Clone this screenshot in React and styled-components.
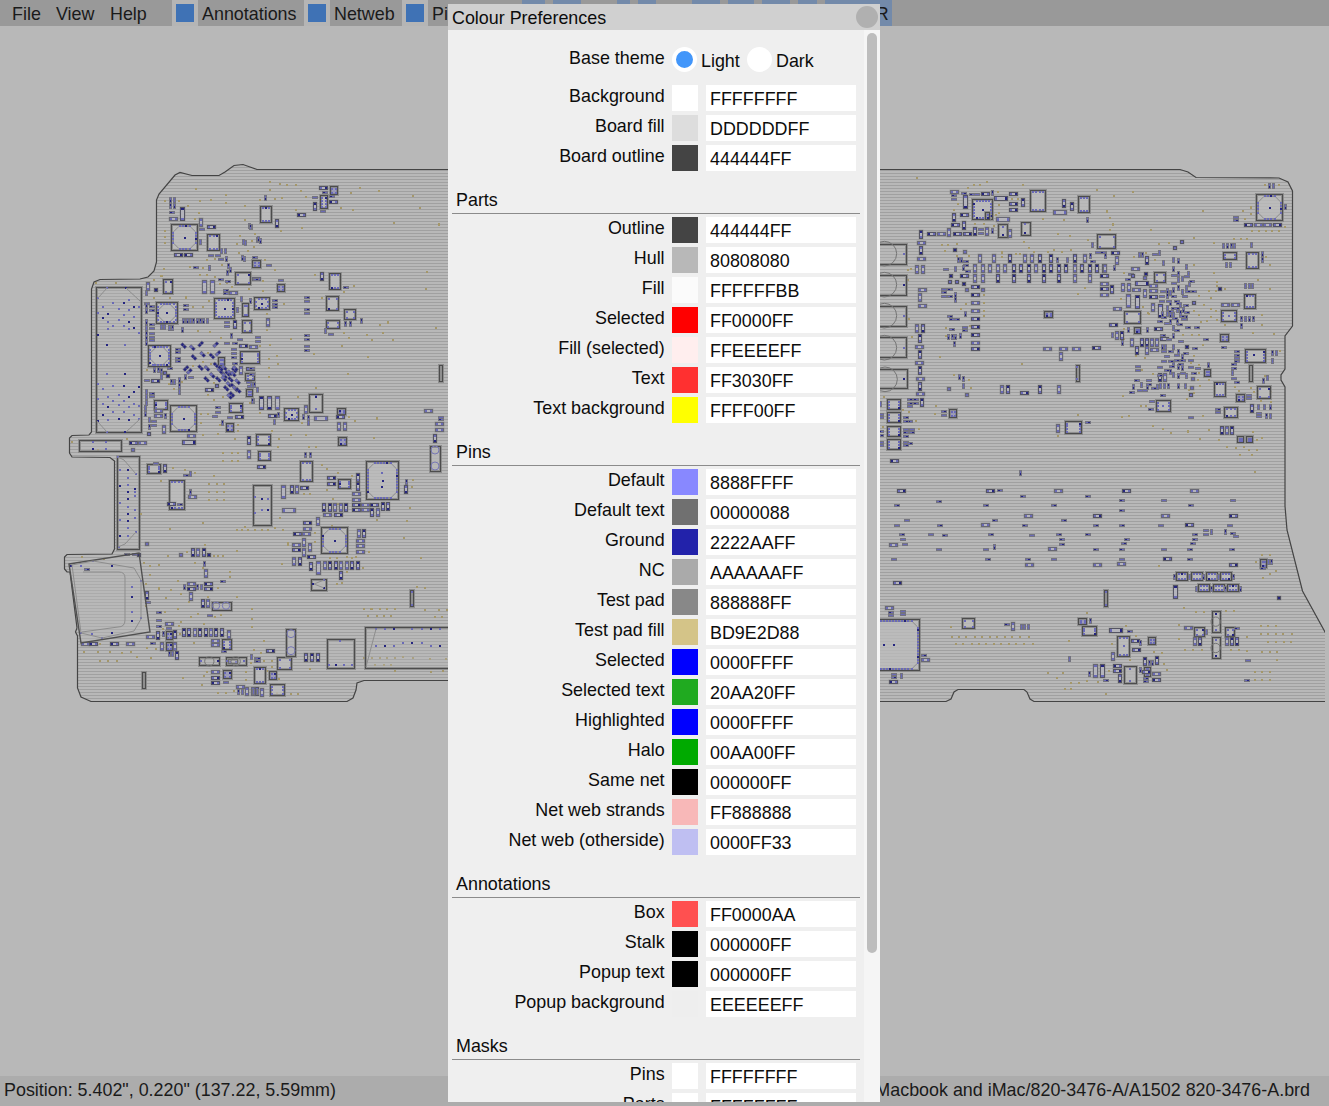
import React from 'react';
import styled, { createGlobalStyle } from 'styled-components';

const Global = createGlobalStyle`
  * { box-sizing: border-box; }
  html, body { margin: 0; height: 100%; overflow: hidden; }
  body { background: #b8b8b8; color: #1a1a1a; font: 17.9px/20px "Liberation Sans", Arial, sans-serif; }
  #root { height: 100%; }
`;

const Shell = styled.div`
  height: 1106px;
  width: 1329px;
  display: flex;
  flex-direction: column;
  overflow: hidden;
  position: relative;
`;
const MenuBar = styled.nav`
  flex: 0 0 26px;
  display: flex;
  align-items: stretch;
  background: #999;
  padding-left: 12px;
`;
const MenuItem = styled.span`
  width: ${p => p.$w}px;
  padding-top: 4px;
  white-space: nowrap;
`;
const CheckBox = styled.span`
  width: 26px;
  padding: 4px;
  background: #b5b5b5;
  &::before { content: ""; display: block; width: 18px; height: 18px; background: #3f72b5; }
`;
const CheckLabel = styled.span`
  width: ${p => p.$w}px;
  padding: 4px 0 0 4px;
  white-space: nowrap;
`;
const ToolButton = styled.button`
  width: ${p => p.$w}px;
  margin: 0 0 0 ${p => p.$gap}px;
  padding: 2px 4px 0;
  border: 0;
  background: #738aaa;
  color: #1a1a1a;
  font: inherit;
`;
const Canvas = styled.main`
  flex: 1;
  min-height: 0;
  svg { display: block; }
`;
const StatusBar = styled.footer`
  flex: 0 0 30px;
  display: flex;
  justify-content: space-between;
  padding: 4px 19px 0 4px;
  background: #acacac;
  white-space: nowrap;
`;

const Dialog = styled.section`
  position: absolute;
  left: 448px;
  top: 4px;
  width: 432px;
  height: 1098px;
  display: flex;
  flex-direction: column;
  background: #efefef;
  color: #0c0c0c;
  overflow: hidden;
`;
const TitleBar = styled.header`
  flex: 0 0 26px;
  display: flex;
  justify-content: space-between;
  align-items: center;
  padding: 2px 2px 0 4px;
  background: #d0d0d0;
`;
const CloseButton = styled.button`
  width: 22px;
  height: 22px;
  margin-top: -2px;
  border: 0;
  border-radius: 50%;
  background: #b0b0b0;
`;
const DialogBody = styled.div`
  flex: 1;
  min-height: 0;
  display: flex;
`;
const Form = styled.div`
  flex: 1;
  min-width: 0;
  padding: 16px 4px 0;
`;
const ScrollTrack = styled.div`
  width: 16px;
  padding: 3px;
  background: #f5f5f5;
`;
const ScrollThumb = styled.div`
  height: 920px;
  border-radius: 5px;
  background: #bdbdbd;
`;
const Row = styled.div`
  display: flex;
  height: 26px;
  margin-bottom: 4px;
`;
const ThemeRow = styled(Row)`
  margin-bottom: 13px;
`;
const Label = styled.label`
  width: 212.6px;
  margin-right: 7.4px;
  padding-top: ${p => p.$top ?? 1}px;
  text-align: right;
  white-space: nowrap;
`;
const Swatch = styled.span`
  width: 26px;
  margin-right: 8px;
  background: ${p => p.$color};
`;
const HexField = styled.input`
  width: 150px;
  padding: 2px 4px 0;
  border: 0;
  outline: 0;
  background: #fff;
  color: #0c0c0c;
  font: inherit;
`;
const Radio = styled.span`
  width: 25px;
  height: 25px;
  margin-top: 1px;
  border: 4px solid #fff;
  border-radius: 50%;
  background: ${p => (p.$on ? '#4296fa' : '#fff')};
`;
const RadioLabel = styled.span`
  width: ${p => p.$w}px;
  padding: 5px 0 0 4px;
`;
const SectionTitle = styled.h2`
  height: 39px;
  margin: 0 0 3px;
  padding: 15px 4px 0;
  border-bottom: 1px solid #8b8b8b;
  font: inherit;
`;

const BOARD = [
  ['Background', '#ffffff', 'FFFFFFFF'],
  ['Board fill', '#dddddd', 'DDDDDDFF'],
  ['Board outline', '#444444', '444444FF'],
];
const SECTIONS = [
  ['Parts', [
    ['Outline', '#444444', '444444FF'],
    ['Hull', '#b8b8b8', '80808080'],
    ['Fill', '#fbfbfb', 'FFFFFFBB'],
    ['Selected', '#ff0000', 'FF0000FF'],
    ['Fill (selected)', '#ffeeee', 'FFEEEEFF'],
    ['Text', '#ff3030', 'FF3030FF'],
    ['Text background', '#ffff00', 'FFFF00FF'],
  ]],
  ['Pins', [
    ['Default', '#8888ff', '8888FFFF'],
    ['Default text', '#707070', '00000088'],
    ['Ground', '#2222aa', '2222AAFF'],
    ['NC', '#aaaaaa', 'AAAAAAFF'],
    ['Test pad', '#888888', '888888FF'],
    ['Test pad fill', '#d4c488', 'BD9E2D88'],
    ['Selected', '#0000ff', '0000FFFF'],
    ['Selected text', '#20aa20', '20AA20FF'],
    ['Highlighted', '#0000ff', '0000FFFF'],
    ['Halo', '#00aa00', '00AA00FF'],
    ['Same net', '#000000', '000000FF'],
    ['Net web strands', '#f8b8b8', 'FF888888'],
    ['Net web (otherside)', '#bfbff2', '0000FF33'],
  ]],
  ['Annotations', [
    ['Box', '#ff5050', 'FF0000AA'],
    ['Stalk', '#000000', '000000FF'],
    ['Popup text', '#000000', '000000FF'],
    ['Popup background', '#eeeeee', 'EEEEEEFF'],
  ]],
  ['Masks', [
    ['Pins', '#ffffff', 'FFFFFFFF'],
    ['Parts', '#ffffff', 'FFFFFFFF'],
  ]],
];

/* Board artwork. Each sector has a pixel origin and is measured in thirds of a pixel.
   Passives are listed by centre: h/v medium, t/u tiny, H/V large, k square.
   Boxes are x,y,w,h: q quad package, b pins top and bottom, s pins at the sides, e corner pins, n none. */
const PASSIVE = { h: [27, 12], v: [12, 27], t: [18, 9], u: [9, 18], H: [42, 15], V: [15, 42], k: [12, 12], d: [9, 18], g: [9, 18] };
const SECTORS = [
  { at: [60, 155], parts: {
    u: '332,136 342,136 332,152 342,152 421,261 447,339 485,288 496,288 499,312 544,432 571,437 260,415',
    t: '337,171 426,223 483,312 503,380 483,374 474,301 453,301 498,407 498,416 408,338 260,446',
    h: '340,193 453,216 355,300 386,300 520,414 589,373',
    v: '424,203 265,393',
    V: '366,177 433,395 457,397',
    k: '289,406',
    d: '567,214 574,217 549,260 556,263 547,309 554,313 592,254 505,332 511,344 503,354',
  }, boxes: { q: '332,207,79,79', b: '440,236,35,48', e: '524,350,44,35 308,371,26,41 577,316,24,22' },
    gold: '407,102 498,120 315,138 357,138 420,138 453,135 384,153 417,174 405,192 498,144 556,153 315,228 315,246 315,264 540,243 555,195 576,258 585,237 530,267 564,288 537,294 582,276 465,311 441,315 486,330 429,339 420,360 441,360 390,336 312,342 303,363 306,363 282,375 168,384 108,384 465,366 480,387 516,396 567,402 501,384 282,429 330,429 378,426 378,429 447,438' },
  { at: [250, 155], parts: {
    h: '220,98 155,181 250,141',
    v: '195,154 82,205 217,365 54,502',
    t: '224,112 246,125 195,127 219,169 58,332 92,376 288,398 15,307 19,373 170,427 170,439 170,462 170,474 170,541 170,553 170,575 170,587 75,436 75,447 75,457 23,547 23,558 243,537',
    u: '46,129 334,498 287,507 301,507 226,528',
    d: '24,252 32,258 2,216',
  }, boxes: { s: '209,121,21,39 241,94,22,24 82,386,20,22 228,494,39,25', b: '31,152,34,47 236,354,33,49', e: '229,422,36,43 282,461,32,30', q: '11,425,46,36' },
    gold: '60,81 60,105 90,87 110,90 138,90 153,108 168,126 96,129 75,132 30,135 138,165 156,219 93,228 15,237 12,276 45,315 75,345 194,360 39,378 39,408 6,259 273,159 303,114 330,99 387,108 489,123 510,159 309,165 432,204 567,207 567,210 531,351 528,402 312,393 282,411 216,429 102,447 51,477 51,525 123,552 192,597 276,573 297,549 282,534 351,540 365,555 390,510 414,504 414,501 399,534 429,555 558,519 60,570 30,573 264,445' },
  { at: [60, 300], parts: {
    t: '275,20 275,32 275,72 275,85 275,101 275,113 275,120 501,67 501,79 501,130 540,117 526,130 330,204 262,242 447,271 474,323 474,336 465,349 510,351 379,17 379,27 355,148 355,158 355,174 355,184 275,280 275,290 283,365 283,375 522,149 522,161 522,173 525,190 287,489 378,526 392,233 567,247 570,260',
    u: '260,15 260,32 260,67 260,84 260,101 260,118 260,130 283,210 294,210 304,212 304,232 335,245 344,245 376,230 260,275 260,292 260,310 257,325 257,342 268,360 514,107 583,256 593,270 579,302 533,30 392,522 390,576',
    h: '286,243 448,271 296,332 296,348 394,407 219,429 246,429 551,139 580,141 570,206 537,352',
    v: '526,73 544,210 313,388 315,505 566,420 566,463',
    H: '387,427',
    d: '303,82 313,82 329,83 338,83 358,239 358,258 358,275 316,349 268,380 488,368',
    k: '316,220 324,228 268,401 219,449 470,258',
    g: '367,91 374,62 382,62 391,62 401,62 411,62 421,62 431,62 441,62 369,62',
  }, diag: '371,137 397,143 422,132 467,134 402,172 428,163 456,168 474,160 422,203 441,205 468,195 493,203 378,205 388,214 440,238 457,226 475,238 480,212 487,219 494,228 503,220 510,218 523,210 526,205 512,238 533,245 499,265 507,253 519,258 526,266 535,271 509,289 516,283 492,236 482,205 520,222',
    boxes: { q: '289,5,63,63 265,134,66,62 329,314,77,79 462,-5,60,60', s: '539,154,58,37 506,308,38,27 499,368,21,23 283,299,39,26 262,493,40,26', e: '547,60,28,37 556,218,28,20 557,268,17,22 475,170,19,24 545,8,18,38', b: '326,539,45,88', n: '109,-39,135,436 57,421,125,34 170,467,65,278' },
    dots: '142,-37 197,-37 113,-6 129,22 144,43 176,28 160,10 192,10 207,-1 207,30 223,22 192,45 223,52 129,55 144,66 176,60 207,66 160,77 192,77 223,85 144,88 207,88 142,136 196,136 142,221 196,221 129,267 160,258 192,258 176,285 144,291 207,291 160,303 192,302 223,277 129,312 223,312 144,322 176,316 207,322 129,345 160,337 192,337 176,357 223,345 144,360 207,360 113,38 238,22 113,104 238,99 113,253 238,262 113,296 238,318 113,362 238,357 142,395 196,395 100,426 139,426 100,448 139,448 180,511 203,511 203,533 203,555 180,558 203,577 225,577 225,566 229,521 174,472',
    gold: '400,20 429,20 414,94 450,97 483,113 444,158 429,186 474,184 453,192 400,198 260,210 367,247 328,253 342,267 462,248 444,284 489,290 462,300 571,310 423,342 443,342 480,376 534,374 423,370 534,392 429,406 474,402 525,418 200,417 489,459 516,459 534,459 489,483 516,483 534,483 339,504 375,510 462,528 304,543 447,552 471,552 492,552 447,576 471,576 492,576 404,520 36,426 114,450' },
  { at: [250, 350], parts: {
    h: '535,183 568,222 568,240 272,200 318,433 318,449 318,465 318,481 345,465 345,481 372,465 66,199 34,352 243,384 243,401 163,413 232,495 265,495 141,552 168,552 173,520 173,537 139,584 139,600 184,622 332,573 332,589 332,606',
    v: '266,228 284,228 222,471 240,471 256,471 273,471 289,471 399,469 415,469 367,488 383,488 325,383 325,408 125,418 141,418 203,515 327,549 343,549 162,576 179,592 162,607 133,634 149,634 183,648 225,646 241,646 258,646 274,646 291,646 307,646 324,646 274,676 555,266 469,418 167,178',
    V: '33,158 57,158 81,158 99,425 204,653', H: '213,204 118,482',
    u: '73,216 85,195 174,203 174,218 160,201 167,315 181,315 469,395 3,104 12,106 23,120 8,153',
    t: '572,201 572,207 6,56 6,74 170,2',
  }, boxes: { q: '101,173,43,37 349,334,97,115 214,530,79,78', b: '149,332,36,60', e: '261,173,23,18 265,260,25,24', s: '19,253,42,34 23,304,36,28 265,388,37,28', n: '178,133,40,54 9,404,53,119 568,45,10,48 541,287,29,74' },
    circles: '555,300,12 555,348,12',
    dots: '198,139 198,142 198,178 15,440 36,447 53,447 36,480 53,480 15,488 397,369 397,411',
    gold: '81,18 84,42 57,27 57,54 57,81 192,12 354,21 294,72 198,114 144,141 29,189 297,201 315,213 382,204 382,207 372,264 66,243 123,255 87,267 84,291 168,255 178,291 198,291 156,219 216,345 231,357 306,378 264,369 231,420 249,447 264,462 180,432 162,432 489,390 486,411 480,474 471,513 381,510 90,504 54,540 36,540 15,540 75,534 99,540 114,579 114,586 96,642 240,624 261,624 291,621 306,624 318,621 246,528 462,564 513,624 357,606 194,549 195,576 339,654 291,666 276,699 261,702 500,711 526,714' },
  { at: [60, 490], parts: {
    v: '398,187 415,187 431,187 439,250 393,320 428,340 444,340 260,316 295,435 344,433 306,469 344,469 351,496 506,432 371,427 387,427 404,427 420,427 437,427 453,427 469,427 486,427 562,605 592,605 580,605',
    u: '432,221 373,291 412,291 424,291 309,433 329,493 338,493 574,500',
    h: '393,282 444,282 393,297 444,297 398,22 334,43 212,463 163,461 76,461 100,461 466,452 466,466 466,546 466,563 466,579 272,442 328,402 542,592',
    t: '488,274 450,376 82,237 360,42 296,368 298,392 298,409 326,415 279,459 264,336 491,484 499,577 592,505 592,514 200,194 225,194',
    k: '260,161 364,195 446,195 238,194', d: '390,8 536,607 547,607',
  }, boxes: { s: '485,447,26,31 488,541,23,25 317,422,18,24 317,457,18,24 504,508,28,12', n: '455,335,56,23 418,502,61,24 497,502,61,24 247,545,9,47' },
    circles: '468,347,11 498,347,11 448,514,14 527,514,14',
    dots: '424,514 473,514 502,514 551,514 203,6 225,17 180,39 203,28 203,50 225,61 203,72 225,83 180,89 203,94 203,115 203,137 180,137 229,127 176,172 33,228 63,228 99,213 155,228 242,273 216,292 216,320 216,365 242,384 216,392 63,429 96,432 155,430 126,444',
    gold: '242,72 330,117 429,99 531,120 555,111 546,120 564,120 585,120 447,30 471,30 492,30 66,201 132,206 252,219 270,228 297,225 324,198 435,165 381,186 405,219 462,198 474,198 489,198 531,183 429,234 510,246 510,261 354,273 270,254 258,282 298,294 298,297 334,300 318,324 363,312 404,292 474,294 387,336 530,321 445,321 258,348 315,366 354,357 414,372 392,381 364,395 575,357 576,387 576,411 483,375 465,382 357,407 432,402 360,432 423,439 401,460 308,417 260,474 288,477 321,481 72,486 114,486 150,486 186,489 213,486 231,501 120,513 144,513 171,513 273,504 370,564 426,586 441,546 432,558 558,546 558,570 474,609 498,609 522,604 120,463' },
  { at: [250, 560], parts: { h: '60,272', v: '169,291 187,291 205,291 36,397', u: '9,397 22,397 4,291', t: '23,294 23,303' },
    boxes: { e: '80,292,42,36 56,334,20,24', s: '61,373,43,33', b: '13,322,34,48', n: '184,56,45,34 231,236,80,86 109,206,28,80 481,91,10,49 344,201,280,124' },
    circles: '123,221,12 123,272,12',
    dots: '486,97 190,72 486,134 223,61 223,84 378,206 405,206 432,206 487,206 515,206 542,206 570,206 460,249 487,249 515,249 378,258 405,258 432,258 542,258 570,258 270,242 236,316 259,316 282,316 306,316',
    gold: '6,147 6,177 6,201 42,243 12,270 33,279 3,310 42,303 67,303 67,322 51,333 87,357 81,399 123,402 144,402 180,327 342,147 363,147 366,147 390,147 411,147 435,147 354,168 381,168 402,168 423,168 526,150 567,150 590,150 555,171 577,171 342,294 366,294 390,294 411,294 435,294 459,291 489,295 376,315 402,315 423,315 541,297 588,297 435,333 543,336 579,333' },
  { at: [875, 155], parts: {
    V: '271,142', H: '379,130 555,171 385,193',
    h: '238,111 331,118 415,116 414,148 414,165 268,181 242,211 170,237 199,237 247,237 277,237 138,264 138,311 142,404 142,453 134,576 134,623 136,671 136,718 301,397 301,420 301,443 301,468 301,491 301,516 301,539 301,564 301,582 268,363 517,582 566,582 604,582 663,578 448,715',
    v: '444,142 568,144 590,153 238,187 267,211 223,232 300,229 337,229 404,234 138,239 138,286 127,343 145,343 134,427 127,520 145,520 136,551 134,598 136,646 136,693 141,741 316,310 358,310 404,310 449,310 470,310 495,310 528,310 600,310 630,310 299,339 324,339 345,339 370,339 391,339 416,339 437,339 462,339 482,339 507,339 528,339 553,339 574,339 600,339 620,339 645,339 666,339 687,339 299,369 324,369 370,369 416,369 462,369 507,369 553,369 600,369 645,369 558,605 381,704 398,704 496,704 553,704 549,820',
    t: '238,122 238,132 267,116 290,117 306,117 318,223 318,235 272,320 272,331 279,350 213,342 208,402 224,402 206,413 208,425 224,425 224,484 230,494 246,494 230,523 271,516 271,526 207,769 207,781 104,733 104,744 104,755 122,733 122,744 17,778 17,788 93,788 104,798 93,798 17,828 17,840 93,822 110,822 93,832 110,832 93,844 17,862 17,872 93,862 93,872 104,866 639,802 668,293 686,293 654,320',
    u: '352,114 352,228 250,316 259,316 265,338 241,342 241,420 241,436 271,478 256,542 221,545 232,545 242,545 238,567 253,666 266,672 266,692 547,314 577,314 646,303 651,270 636,194 17,748',
    k: '240,284 270,291 229,363 225,381 246,381 266,386 276,405 325,405 276,720 221,702',
  }, boxes: { q: '290,133,61,60', b: '466,106,46,64 608,124,33,47', e: '665,236,53,43 508,469,23,19 223,763,21,24 330,172,12,20', s: '569,797,48,35 37,731,38,29 37,772,38,29 37,812,38,29 37,853,38,29', n: '370,208,28,40 437,202,27,40 -30,266,124,59 -30,359,124,59 -30,453,124,59 -30,547,124,60 -30,643,125,58 602,631,8,47' },
    circles: '28,296,37 28,389,37 28,482,37 28,578,37 30,673,37',
    dots: '87,296 87,389 87,482 87,578 88,671 606,637 384,215 384,240 450,208 606,672 450,234',
    gold: '126,69 336,81 444,90 297,90 315,90 279,99 369,110 411,132 429,132 372,150 250,147 237,165 372,174 363,180 504,192 567,195 666,105 300,207 327,207 357,212 447,261 381,291 381,294 381,306 462,279 201,270 219,270 210,288 246,267 246,303 282,303 423,298 434,298 478,291 519,291 538,285 560,291 588,285 108,342 99,345 99,375 327,420 327,444 327,468 273,447 102,492 111,546 195,606 609,417 630,399 441,627 237,660 282,675 288,699 27,726 183,753 180,777 102,771 123,799 84,765 24,817 132,822 609,780 549,843 584,243 549,238 640,255 258,462 284,514 214,520 212,544 327,484' },
  { at: [1100, 155], parts: {
    h: '105,342 160,393 160,409 160,427 109,406 52,463 39,510 174,522 194,552 163,584 13,364 13,386 13,403 13,421 46,295 377,451 405,451 446,211 475,211 503,211 532,211',
    v: '52,316 141,316 16,339 69,398 87,398 136,414 35,402 160,456 51,540 67,540 97,561 126,561 141,561 156,561 171,561 111,586 141,586 181,667 196,667 365,827 381,827 397,827 456,760',
    V: '84,438 113,440 180,468', H: '126,386',
    u: '118,300 128,300 190,324 178,293 221,315 235,318 258,335 17,303 43,340 454,269 487,297 487,316 437,393 447,393 457,393 424,491 437,491 449,491 460,491 424,512 371,272 382,272 393,272 402,272 380,330 391,330 557,157 509,93 519,93 517,595 529,595 517,617 396,655 325,630 489,679 502,668 475,757 493,757 511,757 498,783 511,783 84,526 141,526 38,540 67,563 221,342 236,358 265,358 236,374 201,408 201,424 211,415 248,372 236,400 248,410 258,398 268,388 221,405 211,445 201,460 201,476 211,480 231,465 240,450 249,465 258,490 221,480 240,475 188,478 211,500 231,500 221,518 221,576 236,592 248,605 221,627 236,636 211,650 221,660 236,664 248,640 259,662 181,692 192,692 205,692 236,692 255,692 100,697 141,697 123,690 171,697 188,576 197,576 221,542',
    t: '8,293 165,298 222,362 222,385 262,365 275,380 282,408 256,424 265,408 190,408 186,424 185,440 222,424 232,440 238,444 206,440 222,459 232,459 258,450 262,472 245,484 252,494 192,486 212,468 181,499 202,505 226,490 241,507 231,526 264,517 291,517 190,540 206,552 243,558 317,553 285,580 258,595 250,617 272,617 232,600 232,617 192,589 214,589 202,605 212,620 180,637 202,646 216,635 250,656 272,638 282,655 294,641 242,628 192,620 111,676 147,676 147,687 120,705 134,705 95,712 188,721 155,740 153,763 115,634 115,645 181,660 272,787 372,577 354,762 354,772 478,775 478,785 447,720 447,731 407,187 407,197 411,590 411,601 411,609 411,620 403,628 403,640 402,671 411,681 84,372 92,358 163,700',
    k: '245,262 224,280 138,356 134,369 99,363 283,443 262,577 278,672 276,699 274,720 360,402',
  }, boxes: { q: '467,116,77,77', b: '437,292,35,48 432,418,34,43 342,681,33,43 371,757,38,30', s: '363,466,46,33 368,292,38,21 434,581,60,38 167,736,43,33', e: '161,352,33,31 71,469,48,36 103,517,19,19 359,538,24,21 313,643,18,21 470,694,38,36 409,716,24,20 412,844,18,18 439,844,18,18', n: '447,631,9,47' },
    dots: '386,482 463,600 188,752',
    gold: '42,123 99,111 21,168 30,189 21,171 39,207 39,210 30,225 153,225 309,168 282,249 177,267 207,264 429,168 453,156 453,159 453,177 435,192 495,90 537,90 555,216 456,228 477,228 498,228 516,228 537,228 402,252 423,252 441,252 102,306 138,295 165,315 282,330 72,354 342,354 510,330 498,306 342,264 474,375 510,402 351,381 351,393 348,408 375,402 327,408 297,423 333,429 312,450 333,463 282,468 297,480 333,486 348,468 321,498 303,502 351,496 375,510 486,480 486,510 144,474 147,477 129,456 63,432 72,522 120,518 522,537 459,534 276,541 297,541 249,541 309,571 282,603 273,625 297,630 315,660 297,655 300,694 327,675 72,552 108,604 136,610 126,645 160,657 70,723 124,752 138,752 87,783 66,787 159,813 189,822 213,834 265,828 265,831 327,825 300,852 357,854 382,875 408,878 432,876 447,885 471,855 459,832 486,850 261,732 267,705 294,675 282,715 453,700 513,712 417,709 462,712 540,588 495,662 405,695 309,783 484,738 513,742' },
  { at: [875, 450], parts: {
    h: '58,34 79,123 345,123 549,123 755,123 959,123 461,197 666,197 871,197 1075,197 331,225 943,225 56,284 532,298 462,345 666,345 740,343 877,328 1075,346 67,398 42,473 152,630 56,696 728,647 728,663 784,600 844,672 844,691 782,573 940,535 815,665',
    t: '374,121 444,138 640,138 741,151 868,151 1074,151 193,153 67,167 333,167 537,167 947,167 741,182 97,211 361,211 567,211 67,226 194,226 450,226 663,226 741,226 858,226 1064,226 82,254 168,254 210,255 348,254 471,255 551,254 639,254 960,253 83,269 561,269 757,269 960,269 91,284 561,284 747,279 954,279 193,298 333,298 663,298 741,298 868,298 946,298 1072,298 56,328 340,328 459,328 538,328 741,328 946,328 993,241 993,253 1074,250 1083,259 1164,356 395,523 764,545 692,691 814,686 814,695 1119,631 1115,690 1086,535 48,487 48,496 84,485 84,494 148,617 57,674 57,683',
    u: '437,70 359,291 1008,247 1052,247 647,513 438,532 449,532 459,532 583,628 643,672 796,578 796,660 993,547 898,380 942,380 986,380 1029,380 1074,380 964,416 1008,416 1051,416 1096,416 1180,336 1189,336 824,638 833,638 80,678',
    v: '415,530 713,619 735,684 810,634 846,630 960,574 975,574 1055,574 1071,574 1087,574', V: '900,425 660,663 683,663', H: '722,540',
    k: '1213,445',
  }, boxes: { q: '-80,508,213,153', b: '727,558,37,61 904,365,32,23 948,365,32,23 992,365,32,23 1036,365,32,23 970,401,32,22 1013,401,32,22 1057,401,32,22 806,652,17,27', e: '262,505,37,31 610,503,24,18 956,530,29,28 1050,530,26,26 1156,326,18,23 820,562,22,22', s: '622,529,41,28', n: '748,649,37,51 688,421,9,48 1010,484,24,62 1010,562,24,63' },
    circles: '1022,515,14 1022,594,14', dots: '1022,539 57,584 1022,569 766,656 1022,491 766,692 692,427 1022,617 746,588 692,464',
    gold: '1095,16 1131,15 1145,0 1140,66 852,349 1143,336 1160,316 1185,316 1203,363 1185,372 1164,384 928,474 963,486 987,486 1052,484 1077,484 636,489 228,531 231,561 252,561 273,561 300,561 321,561 345,561 366,561 390,561 411,561 435,561 462,561 243,582 264,582 291,582 312,582 333,582 357,582 378,582 402,582 423,582 447,582 474,582 582,573 754,528 783,558 711,582 765,630 837,606 861,609 866,642 876,660 912,525 912,567 930,600 954,600 980,600 1068,600 1092,600 1116,561 1158,529 1179,529 1203,529 1158,552 1179,552 1203,552 1224,552 1250,552 1179,576 1203,576 1227,576 1248,576 1161,606 1185,606 1206,606 1116,603 1206,630 1140,666 1161,666 1185,666 1140,690 1161,690 1185,690 519,669 546,684 564,669 588,699 612,699 636,693 669,696 702,663 570,717 588,717 693,732' },
];

const tuples = text => (text || '').trim().split(/\s+/).filter(Boolean).map(item => item.split(',').map(Number));
const snap = value => Math.round(value / 3) * 3;
const BLUE = '#6a6ab6';
const NAVY = '#252580';

function Passive({ x, y, kind }) {
  const [w, h] = PASSIVE[kind];
  const horizontal = w >= h;
  const small = Math.min(w, h) < 12;
  const seed = Math.round(x * 5 + y * 3) % 7;
  const strong = seed < 4;
  const l = snap(x - w / 2);
  const t = snap(y - h / 2);
  const pad = small ? 6 : horizontal ? Math.max(6, h - 9) : Math.max(6, w - 9);
  const pw = horizontal ? pad : w - 6;
  const ph = horizontal ? h - 6 : pad;
  const swap = seed % 2 === 0;
  const dark = strong ? NAVY : BLUE;
  return (
    <g>
      {!small && <rect x={l - 1.5} y={t - 1.5} width={w + 3} height={h + 3} fill="#808080" fillOpacity="0.5" />}
      <rect x={l} y={t} width={w} height={h} fill={small ? '#74747f' : strong ? '#545462' : '#686874'} />
      <rect x={l + 3} y={t + 3} width={w - 6} height={h - 6} fill={small ? '#62628c' : '#b4b4bc'} />
      <rect x={l + 3} y={t + 3} width={pw} height={ph} fill={swap ? dark : BLUE} />
      <rect x={l + w - 3 - pw} y={t + h - 3 - ph} width={pw} height={ph} fill={swap ? BLUE : dark} />
    </g>
  );
}

const spread = (from, to, step) => {
  const n = Math.max(1, Math.round((to - from) / step));
  return Array.from({ length: n + 1 }, (_, i) => from + ((to - from) * i) / n);
};

function Package({ type, x: left, y: top, w: width, h: height }) {
  const x = snap(left) + 1.5;
  const y = snap(top) + 1.5;
  const w = snap(width);
  const h = snap(height);
  const pins = [];
  const tiny = w < 27 && h < 27;
  if (type === 'q') {
    const c = w > 70 ? 24 : 12;
    spread(x + c, x + w - c, 9).forEach(px => { pins.push([px, y + 5], [px, y + h - 5]); });
    spread(y + c, y + h - c, 9).forEach(py => { pins.push([x + 5, py], [x + w - 5, py]); });
    pins.push([x + w / 2, y + h / 2, NAVY]);
  } else if (type === 'b') {
    spread(x + 7, x + w - 7, 12).forEach(px => { pins.push([px, y + 5], [px, y + h - 5]); });
  } else if (type === 's') {
    spread(y + 6, y + h - 6, 9).forEach(py => { pins.push([x + 5, py], [x + w - 5, py]); });
  } else if (type === 'e') {
    pins.push([x + 6, y + 6], [x + w - 6, y + 6], [x + 6, y + h - 6], [x + w - 6, y + h - 6]);
  }
  const c = 22;
  return (
    <g>
      <rect x={x} y={y} width={w} height={h} fill={type === 'n' ? '#b8b8b8' : tiny ? '#9494bc' : '#bcbcbc'} fillOpacity={type === 'n' && w > 45 ? 0.3 : 0.75} stroke="#848484" strokeOpacity="0.8" strokeWidth="9" />
      <rect x={x} y={y} width={w} height={h} fill="none" stroke="#4c4c4c" strokeWidth="3" />
      {type === 'q' && w > 60 && (
        <path d={`M${x + c} ${y + 6}H${x + w - c}L${x + w - 6} ${y + c}V${y + h - c}L${x + w - c} ${y + h - 6}H${x + c}L${x + 6} ${y + h - c}V${y + c}Z`} fill="none" stroke="#8b8b8b" strokeWidth="3" />
      )}
      {pins.map(([px, py, color], i) => (
        <rect key={i} x={snap(px - 3)} y={snap(py - 3)} width="6" height="6" fill={color || ((i * 7 + left) % 9 === 0 ? NAVY : BLUE)} />
      ))}
    </g>
  );
}

function Sector({ at, parts, boxes, dots, gold, circles, diag }) {
  return (
    <g transform={`translate(${at[0]} ${at[1]}) scale(0.3333333333)`}>
      {tuples(gold).map(([x, y], i) => <rect key={i} x={snap(x - 3)} y={snap(y - 3)} width="6" height="6" fill="#a4976a" />)}
      {Object.entries(boxes).map(([type, list]) => tuples(list).map(([x, y, w, h], i) => (
        <Package key={type + i} type={type} x={x} y={y} w={w} h={h} />
      )))}
      {Object.entries(parts).map(([kind, list]) => tuples(list).map(([x, y], i) => (
        <Passive key={kind + i} kind={kind} x={x} y={y} />
      )))}
      {tuples(diag).map(([x, y], i) => (
        <g key={i} transform={`rotate(${[378, 388, 422, 467, 474].includes(x) && y !== 203 ? -45 : 45} ${x} ${y})`}>
          <rect x={x - 10} y={y - 5} width="20" height="10" fill="#696980" />
          <rect x={x - 8} y={y - 3} width="7" height="7" fill={i % 2 ? BLUE : NAVY} />
          <rect x={x + 1} y={y - 3} width="7" height="7" fill={NAVY} />
        </g>
      ))}
      {tuples(circles).map(([x, y, r], i) => (
        <circle key={i} cx={x} cy={y} r={r} fill="none" stroke={r < 13 ? '#7777b5' : '#747474'} strokeWidth="3" />
      ))}
      {tuples(dots).map(([x, y], i) => (
        <rect key={i} x={snap(x - 3)} y={snap(y - 3)} width="6" height="6" fill={i % 3 === 1 ? NAVY : BLUE} />
      ))}
    </g>
  );
}

const OUTLINE = 'M257 169.5L250 167L243 164.5L234 165.5L225 172L219 175.5H192L180 172.5L175 175L159 194L156.5 200V262L154 271L148 277L140 279L100 279.5L94 282L91.5 289V432L89 435L72 435.5L69.5 438V453L72 457L110 457.5L114.5 461V549L112 554L67 554.5L64.5 557V569L67 572H70L77 628L75.5 632L77.5 636V688L81 697L91 701.5H347L353 698L356 690L357 683L364 680.5H700V701.5H946L951 699L954 692L958 689.5H1024L1027 692L1030 699L1034 701.5H1340V660L1325 632L1302.5 591L1287 530L1285 506V387L1281 380V375L1285 369V336L1292.5 326V191L1288 182L1279 178L1196 177.5L1188 172L1180 169.5Z';
const SOCKET = 'M69 564L139 553L150 632L81 643Z';

function Board() {
  return (
    <svg width="1329" height="1050" viewBox="0 26 1329 1050">
      <defs>
        <pattern id="scan" width="3" height="3" patternUnits="userSpaceOnUse">
          <rect y="2" width="3" height="1" fill="#a0a0a0" />
        </pattern>
        <clipPath id="view"><rect y="26" width="1325" height="1050" /></clipPath>
      </defs>
      <g clipPath="url(#view)">
        <path d={OUTLINE} fill="url(#scan)" />
        <path d={OUTLINE} fill="none" stroke="#444" strokeWidth="1.2" />
        <path d={SOCKET} fill="#b8b8b8" fillOpacity="0.45" />
        {SECTORS.map((sector, i) => <Sector key={i} {...sector} />)}
        <path d={SOCKET} fill="none" stroke="#505050" strokeWidth="1.4" />
        <path d="M72 565L93 561L134 568L141 580V619L134 631L102 638L81 633ZM83 572H119Q125 572 125 578V620Q125 627 118 627L82 632M98 298L107 288M126 288L140 301M97 421L107 432M126 432L140 419M118 457L124 460L136 474M136 532L125 544L118 547M366 667L376 629M324 580L314 584L324 588" fill="none" stroke="#8d8d8d" strokeWidth="1" />
      </g>
    </svg>
  );
}

const ColourRow = ({ item: [label, color, hex] }) => (
  <Row>
    <Label>{label}</Label>
    <Swatch $color={color} />
    <HexField defaultValue={hex} aria-label={label} />
  </Row>
);

export default function App() {
  return (
    <Shell>
      <Global />
      <MenuBar>
        <MenuItem $w={44}>File</MenuItem>
        <MenuItem $w={54}>View</MenuItem>
        <MenuItem $w={62}>Help</MenuItem>
        <CheckBox /><CheckLabel $w={106}>Annotations</CheckLabel>
        <CheckBox /><CheckLabel $w={72}>Netweb</CheckLabel>
        <CheckBox /><CheckLabel $w={94}>Pins</CheckLabel>
        {[[23, 0], [28, 8], [13, 36], [18, 8], [28, 36], [26, 8], [28, 8], [19, 8]].map(([w, gap], i) => (
          <ToolButton key={i} $w={w} $gap={gap} />
        ))}
        <ToolButton $w={67} $gap={8}>CLEAR</ToolButton>
      </MenuBar>
      <Canvas><Board /></Canvas>
      <StatusBar>
        <span>Position: 5.402", 0.220" (137.22, 5.59mm)</span>
        <span>Macbook and iMac/820-3476-A/A1502 820-3476-A.brd</span>
      </StatusBar>
      <Dialog>
        <TitleBar>Colour Preferences<CloseButton aria-label="Close" /></TitleBar>
        <DialogBody>
          <Form>
            <ThemeRow>
              <Label $top={2}>Base theme</Label>
              <Radio $on /><RadioLabel $w={50}>Light</RadioLabel>
              <Radio /><RadioLabel $w={50}>Dark</RadioLabel>
            </ThemeRow>
            {BOARD.map(item => <ColourRow key={item[0]} item={item} />)}
            {SECTIONS.map(([title, rows]) => (
              <React.Fragment key={title}>
                <SectionTitle>{title}</SectionTitle>
                {rows.map(item => <ColourRow key={item[0]} item={item} />)}
              </React.Fragment>
            ))}
          </Form>
          <ScrollTrack><ScrollThumb /></ScrollTrack>
        </DialogBody>
      </Dialog>
    </Shell>
  );
}
